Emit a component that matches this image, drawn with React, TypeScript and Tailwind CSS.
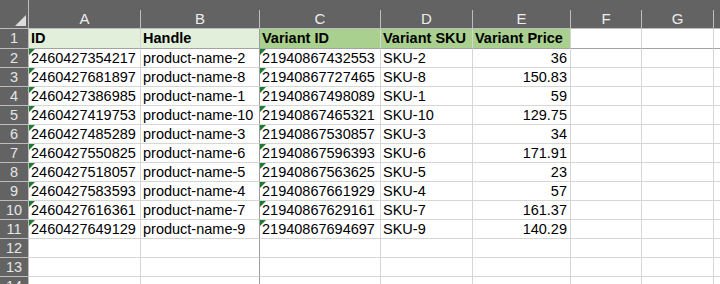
import React from "react";

const cols = [
  { key: "A", w: 112 },
  { key: "B", w: 119 },
  { key: "C", w: 121 },
  { key: "D", w: 92 },
  { key: "E", w: 98 },
  { key: "F", w: 71 },
  { key: "G", w: 72 },
  { key: "H", w: 72 },
];

const data: [string, string, string, string, string][] = [
  ["2460427354217", "product-name-2", "21940867432553", "SKU-2", "36"],
  ["2460427681897", "product-name-8", "21940867727465", "SKU-8", "150.83"],
  ["2460427386985", "product-name-1", "21940867498089", "SKU-1", "59"],
  ["2460427419753", "product-name-10", "21940867465321", "SKU-10", "129.75"],
  ["2460427485289", "product-name-3", "21940867530857", "SKU-3", "34"],
  ["2460427550825", "product-name-6", "21940867596393", "SKU-6", "171.91"],
  ["2460427518057", "product-name-5", "21940867563625", "SKU-5", "23"],
  ["2460427583593", "product-name-4", "21940867661929", "SKU-4", "57"],
  ["2460427616361", "product-name-7", "21940867629161", "SKU-7", "161.37"],
  ["2460427649129", "product-name-9", "21940867694697", "SKU-9", "140.29"],
];

const headers = ["ID", "Handle", "Variant ID", "Variant SKU", "Variant Price"];

function Tri() {
  return (
    <span className="absolute left-0 top-0 w-0 h-0 border-t-[6px] border-r-[6px] border-t-[#1e7b34] border-r-transparent" />
  );
}

export default function App() {
  return (
    <div
      className="w-[720px] h-[284px] overflow-hidden bg-white text-black"
      style={{ fontFamily: '"Liberation Sans", Arial, sans-serif' }}
    >
      {/* column header */}
      <div className="flex h-[29px] bg-[#636363] border-b border-[#bdbdbd] items-end whitespace-nowrap">
        <div className="relative w-[29px] h-[28px] shrink-0 border-r border-[#bdbdbd]">
          <svg className="absolute left-[15px] top-[15px]" width="11" height="11" viewBox="0 0 11 11">
            <polygon points="0,11 11,11 11,0" fill="#dcdcdc" />
          </svg>
        </div>
        {cols.map((c) => (
          <div
            key={c.key}
            className="h-[18px] shrink-0 border-r border-[#bdbdbd] text-center text-[15px] leading-[18px] text-[#ededed]"
            style={{ width: c.w }}
          >
            {c.key}
          </div>
        ))}
      </div>
      {/* rows */}
      {Array.from({ length: 14 }).map((_, ri) => {
        const rowNum = ri + 1;
        const isHead = rowNum === 1;
        const d = rowNum >= 2 && rowNum <= 11 ? data[rowNum - 2] : null;
        const h = isHead ? "h-[20px]" : "h-[19px]";
        const bottom = isHead ? "border-b-[#a3a3a3]" : "border-b-[#d6d6d6]";
        return (
          <div key={rowNum} className={`flex ${h} whitespace-nowrap text-[14.5px] leading-[18px]`}>
            <div className={`w-[29px] shrink-0 bg-[#636363] border-r border-b border-r-[#bdbdbd] border-b-[#bdbdbd] text-center text-[#e6e6e6]`}>
              {rowNum}
            </div>
            {cols.map((c, ci) => {
              let bg = "bg-white";
              if (isHead && ci <= 1) bg = "bg-[#e2efda]";
              if (isHead && ci >= 2 && ci <= 4) bg = "bg-[#a9d08e]";
              const right = ci === 1 ? "border-r-[#9c9c9c]" : "border-r-[#d6d6d6]";
              let text = "";
              if (isHead && ci <= 4) text = headers[ci];
              if (d && ci <= 4) text = d[ci];
              const align = !isHead && ci === 4 ? "text-right pr-[3px]" : "text-left pl-[2px]";
              return (
                <div
                  key={c.key}
                  className={`relative shrink-0 overflow-visible border-r border-b ${right} ${bottom} ${bg} ${align} ${isHead ? "font-bold" : ""}`}
                  style={{ width: c.w }}
                >
                  {d && (ci === 0 || ci === 2) && <Tri />}
                  {text}
                </div>
              );
            })}
          </div>
        );
      })}
    </div>
  );
}
